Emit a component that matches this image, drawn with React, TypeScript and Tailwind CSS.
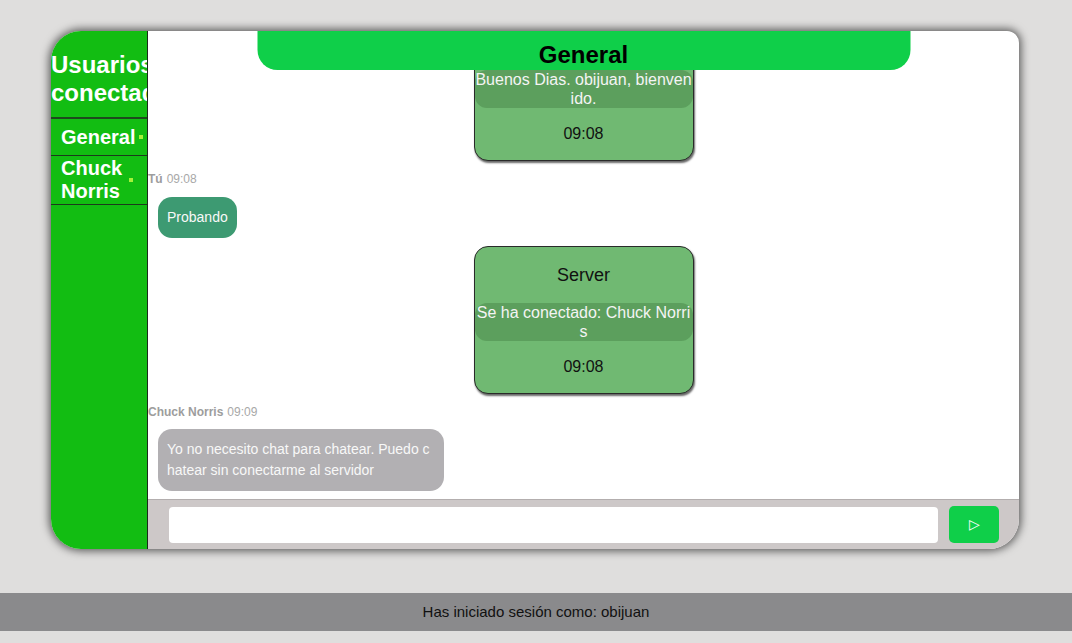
import React from 'react';

type Msg =
    | { kind: 'server'; text: string; time: string }
    | { kind: 'user'; from: string; text: string; time: string; mine?: boolean };

const messages: Msg[] = [
    { kind: 'server', text: 'Buenos Dias. obijuan, bienvenido.', time: '09:08' },
    { kind: 'user', from: 'Tú', text: 'Probando', time: '09:08', mine: true },
    { kind: 'server', text: 'Se ha conectado: Chuck Norris', time: '09:08' },
    { kind: 'user', from: 'Chuck Norris', text: 'Yo no necesito chat para chatear. Puedo chatear sin conectarme al servidor', time: '09:09' },
];

const users = ['General', 'Chuck Norris'];

const ServerCard = ({ text, time }: { text: string; time: string }) => (
    <div className="mx-auto w-[220px] shrink-0 rounded-[14px] border border-[#2a2a2a] bg-[#70b972] text-center shadow-[1px_2px_2px_rgba(0,0,0,0.6)]">
        <h3 className="mt-[18px] text-[18px] leading-[21px] text-[#111]">Server</h3>
        <div className="mt-[17px] rounded-[12px] bg-[#5c9f5d] text-[16px] leading-[19px] text-[#f4f4f4] break-all">{text}</div>
        <p className="mt-[17px] mb-[17px] text-[16px] leading-[18px] text-[#111]">{time}</p>
    </div>
);

const UserMsg = ({ from, text, time, mine }: { from: string; text: string; time: string; mine?: boolean }) => (
    <div className="flex flex-col items-start">
        <div className="flex items-center pt-[2px] text-[12px] leading-[17px] text-[#9d9d9d]">
            <span className="font-bold">{from}</span>
            <span className="ml-[4px] text-[#a8a8a8]">{time}</span>
        </div>
        <div className={(mine ? 'mt-[9px] bg-[#3d9a72] ' : 'mt-[8px] bg-[#b2b0b3] ') + 'ml-[10px] max-w-[286px] rounded-[14px] px-[9px] py-[10px] text-[14px] leading-[21px] text-[#f8f8f8] break-all'}>
            {text}
        </div>
    </div>
);

const App = () => {
    const listRef = React.useRef<HTMLDivElement>(null);

    // keep chat scrolled to the last message
    React.useLayoutEffect(() => {
        if (listRef.current) listRef.current.scrollTop = listRef.current.scrollHeight;
    }, []);

    return (
        <div className="min-h-[643px] bg-[#dfdedd] pt-[31px] font-['Liberation_Sans',Arial,sans-serif]">
            <div className="ml-[51px] flex h-[518px] w-[968px] overflow-hidden rounded-[30px] rounded-tr-[12px] bg-white shadow-[0_0_8px_2px_rgba(0,0,0,0.6)]">
                {/* Sidebar */}
                <aside className="flex w-[97px] shrink-0 flex-col overflow-hidden border-r border-[#1c2a1c] bg-[#12bd12] text-white">
                    <h2 className="mt-[20px] mb-[10px] whitespace-nowrap text-[24px] font-bold leading-[28px]">
                        Usuarios<br />conectados
                    </h2>
                    <div className="border-t-2 border-[#1d4a1d]">
                        {users.map((u) => (
                            <div key={u} className="flex min-h-[37px] items-center border-b border-[#1c3a1c] py-[1px] pl-[10px]">
                                <span className="w-min text-[20px] font-bold leading-[23px]">{u}</span>
                                <span className={(u === 'General' ? 'ml-[4px] ' : 'ml-[7px] ') + 'h-[4px] w-[4px] shrink-0 bg-[#a6f23a]'} />
                            </div>
                        ))}
                    </div>
                </aside>

                {/* Chat */}
                <main className="relative flex min-w-0 flex-1 flex-col">
                    <div className="absolute left-1/2 top-0 z-10 h-[39px] w-[653px] -translate-x-1/2 rounded-b-[20px] bg-[#0fcf49] pt-[10px] text-center text-[24px] font-bold leading-[28px] text-black">
                        General
                    </div>
                    <div ref={listRef} className="flex min-h-0 flex-1 flex-col gap-2 overflow-y-auto pb-2 [scrollbar-width:none]">
                        {messages.map((m, i) =>
                            m.kind === 'server'
                                ? <ServerCard key={i} text={m.text} time={m.time} />
                                : <UserMsg key={i} from={m.from} text={m.text} time={m.time} mine={m.mine} />
                        )}
                    </div>
                    <div className="flex h-[50px] shrink-0 items-center gap-[11px] border-t border-[#b3aeae] bg-[#cdc8c8] pl-[21px] pr-[20px]">
                        <input className="h-[36px] flex-1 rounded-[4px] bg-white px-2 text-[14px] outline-none" />
                        <button className="h-[37px] w-[50px] rounded-[5px] bg-[#0fcf49] text-[14px] text-white">▷</button>
                    </div>
                </main>
            </div>

            <footer className="mt-[44px] flex h-[38px] items-center justify-center bg-[#8a8a8c] text-[15px] text-[#111]">
                Has iniciado sesión como: obijuan
            </footer>
        </div>
    );
};

export default App;
